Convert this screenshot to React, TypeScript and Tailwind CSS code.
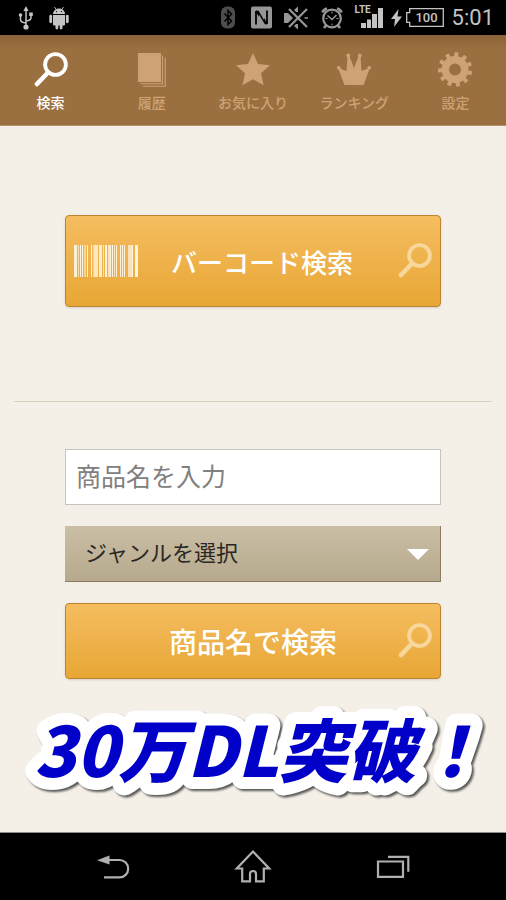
import type { ReactNode } from 'react';

const jp = "font-['Noto_Sans_CJK_JP',sans-serif]";

function SearchIcon() {
  return (
    <svg width="34" height="36" viewBox="0 0 34 36" fill="none" stroke="currentColor" aria-hidden="true">
      <circle cx="21.5" cy="12.5" r="10.4" strokeWidth="3.8" />
      <path d="M14 20.5L3 32" strokeWidth="4.6" strokeLinecap="round" />
    </svg>
  );
}

function HistoryIcon() {
  return (
    <svg width="34" height="36" viewBox="0 0 34 36" fill="none" stroke="currentColor" aria-hidden="true">
      <path d="M3 1h23v29H3z" fill="currentColor" stroke="none" />
      <path d="M27.5 3.5v28.2H5.5M30.2 5.8v28.4H8" strokeWidth="1.1" />
    </svg>
  );
}

function StarIcon() {
  return (
    <svg width="34" height="36" viewBox="0 0 34 36" fill="currentColor" aria-hidden="true">
      <path d="M17 1l5 11 12 1.3-9 8 2.6 12L17 27.2 6.4 33.3l2.6-12-9-8L12 12z" />
    </svg>
  );
}

function CrownIcon() {
  return (
    <svg width="34" height="36" viewBox="0 0 34 36" fill="currentColor" aria-hidden="true">
      <path d="M7.5 33L1.5 17l1.5-.5 6.5 2.500L10.500 4h1.800L17 16l4.700-12h1.800l1 15 6.500-2.500 1.500.5-6 16z" />
      <circle cx="1.8" cy="15.800" r="1.900" />
      <circle cx="11.200" cy="3.500" r="1.900" />
      <circle cx="22.800" cy="3.500" r="1.900" />
      <circle cx="32.200" cy="15.800" r="1.900" />
    </svg>
  );
}

function GearIcon() {
  return (
    <svg width="34" height="36" viewBox="0 0 34 36" aria-hidden="true">
      <circle cx="17" cy="17.5" r="9.7" fill="none" stroke="currentColor" strokeWidth="7.4" />
      {[5, 38, 70, 103, 136, 169, 201, 234, 267, 300, 332].map((angle) => (
        <rect key={angle} x="15" y="0.3" width="4" height="6" fill="currentColor" transform={`rotate(${angle} 17 17.5)`} />
      ))}
    </svg>
  );
}

const tabs: { label: string; icon: ReactNode }[] = [
  { label: '検索', icon: <SearchIcon /> },
  { label: '履歴', icon: <HistoryIcon /> },
  { label: 'お気に入り', icon: <StarIcon /> },
  { label: 'ランキング', icon: <CrownIcon /> },
  { label: '設定', icon: <GearIcon /> },
];

// [x, 幅, 不透明度]
const bars = [
  [0, 3, 0.9], [4, 1, 0.6], [6, 1, 0.9], [8, 1, 0.9], [10, 2, 0.5], [13, 1, 0.9],
  [17, 1, 0.9], [19, 1, 0.5], [20, 4, 0.75], [25, 3, 0.85], [29, 1, 0.7], [31, 2, 0.9],
  [34, 2, 0.7], [36, 1, 0.9], [38, 1, 0.9], [40, 1, 0.7], [42, 1, 0.9], [46, 1, 0.9],
  [48, 1, 0.9], [50, 1, 0.9], [54, 4, 0.7], [58, 1, 0.9], [61, 3, 0.95],
];

function Barcode() {
  return (
    <svg width="64" height="32" viewBox="0 0 64 32" fill="#fff8e8" aria-hidden="true">
      {bars.map(([x, width, opacity]) => (
        <rect key={x} x={x} y="0" width={width} height="32" opacity={opacity} />
      ))}
    </svg>
  );
}

function StatusBar() {
  return (
    <div className="flex h-[35px] items-center justify-between bg-black pr-3 pl-[18px] text-[#c4c4c4]">
      <div className="flex items-center gap-4">
        <svg width="15" height="24" viewBox="0 0 15 24" fill="none" stroke="currentColor" strokeWidth="1.5" aria-hidden="true">
          <path d="M8 4v16M2.5 9v4.5q0 3 5.5 3.5M13 8v3.5q0 3-5 3.5" />
          <path d="M8 0l2.6 5H5.4z" fill="currentColor" stroke="none" />
          <circle cx="2.5" cy="9" r="1.8" fill="currentColor" stroke="none" />
          <path d="M11.2 6.5h3.6v3.6h-3.6z" fill="currentColor" stroke="none" />
          <circle cx="8" cy="21" r="2.6" fill="currentColor" stroke="none" />
        </svg>
        <svg width="20" height="24" viewBox="0 0 20 24" fill="currentColor" aria-hidden="true">
          <path d="M4 8c0-3 2.500-5.500 6-5.500S16 5 16 8z" />
          <path d="M5.5 1l2 3M14.5 1l-2 3" stroke="currentColor" strokeWidth=".9" />
          <path d="M4 9h12v9.500q0 1-1 1h-1.500V22a1.400 1.400 0 0 1-2.800 0v-2.500H9.300V22a1.400 1.400 0 0 1-2.800 0v-2.500H5q-1 0-1-1z" />
          <rect x="0.3" y="8.8" width="2.8" height="8.4" rx="1.4" />
          <rect x="16.9" y="8.8" width="2.8" height="8.4" rx="1.4" />
          <circle cx="7.5" cy="5.6" r=".7" fill="#000" />
          <circle cx="12.5" cy="5.6" r=".7" fill="#000" />
        </svg>
      </div>
      <div className="flex items-center">
        <div className="mr-3 flex items-center gap-3 text-[#969696]">
          <svg className="mr-1" width="14" height="23" viewBox="0 0 14 23" aria-hidden="true">
            <rect width="14" height="22" y=".5" rx="6" fill="#4d4d4d" />
            <path d="M3.5 7.5l7 7.5L7 18.5v-14L10.5 8l-7 7.5" fill="none" stroke="#000" strokeWidth="1.5" />
          </svg>
          <svg width="21" height="23" viewBox="0 0 21 23" aria-hidden="true">
            <rect width="21" height="22" y=".5" rx="2" fill="#969696" />
            <path d="M5 18.500V5M16 18V4.500" fill="none" stroke="#000" strokeWidth="1.800" />
            <path d="M5 4.500l4 .5 7 12v1.500l-3.500-.5L5 6z" fill="#000" />
            <path d="M8 19V8.500l6 10" fill="#969696" />
            <path d="M13 4.500V14L7.500 4.500" fill="#969696" />
          </svg>
          <svg width="25" height="24" viewBox="0 0 25 24" fill="currentColor" aria-hidden="true">
            <path d="M0 7h4l5 5-5 5H0zM10 4l4-3.500v5.500h-2zM12 18h2v5.500L10 20z" />
            <path d="M5 3l18 18M23 3L5 21" stroke="currentColor" strokeWidth="2.2" />
            <path d="M20.500 12h3.500" stroke="currentColor" strokeWidth="1.5" />
          </svg>
          <svg width="22" height="24" viewBox="0 0 22 24" fill="none" stroke="currentColor" aria-hidden="true">
            <circle cx="11" cy="12.5" r="8.8" strokeWidth="2.2" />
            <path d="M6.5 9.5l4.500 4 4.500-4.500" strokeWidth="1.6" />
            <path d="M1.500 6.500Q2.500 3.500 6 2.500M20.500 6.500Q19.500 3.500 16 2.500M5 19.500L3 22M17 19.500l2 2.500" strokeWidth="2.8" />
            <path d="M11 5.500v2M11 17.500v2M4.500 12.500h2M15.500 12.500h2" strokeWidth="1" />
          </svg>
        </div>
        <div className="relative mr-2 h-6 w-7">
          <span className="absolute -top-1 left-0 font-['Roboto',sans-serif] text-[10px] leading-4 font-bold">LTE</span>
          <svg width="28" height="24" viewBox="0 0 28 24" fill="currentColor" aria-hidden="true">
            <path d="M6 17h5v5H6zM12 13.500h4V22h-4zM17 8h5v14h-5zM23 2h5v20h-5z" />
          </svg>
        </div>
        <svg className="mr-1" width="11" height="18" viewBox="0 0 11 18" fill="currentColor" aria-hidden="true">
          <path d="M7.5 0L0 10h4L3 18l8-10.500H6.500z" />
        </svg>
        <div className="relative mr-2 flex h-[19px] w-[38px] items-center justify-center pl-1 font-['Roboto',sans-serif] text-[13px] leading-4 font-medium">
          <svg className="absolute inset-0" width="38" height="19" viewBox="0 0 38 19" fill="none" stroke="currentColor" strokeWidth="1.3" aria-hidden="true">
            <path d="M3.7.7h33.6v17.6H3.7v-4H.7V4.7h3z" />
          </svg>
          100
        </div>
        <span className="font-['Roboto',sans-serif] text-[22px] leading-6">5:01</span>
      </div>
    </div>
  );
}

function AndroidNav() {
  return (
    <div className="grid h-[68px] grid-cols-3 place-items-center border-t border-[#8c8c8c] bg-black px-[43px] text-[#b0b0b0]">
      <button type="button" aria-label="戻る">
        <svg width="34" height="34" viewBox="0 0 34 34" fill="none" stroke="currentColor" strokeWidth="2.2">
          <path d="M12 10h11.500a8.700 8.700 0 0 1 0 17.400H8" />
          <path d="M1 10.3L13.5 5.500v9z" fill="currentColor" stroke="none" />
        </svg>
      </button>
      <button type="button" aria-label="ホーム">
        <svg width="38" height="36" viewBox="0 0 38 36" fill="none" stroke="currentColor" strokeWidth="2.2">
          <path d="M19 2.500L2.800 19.500H8.200V32.300H16V25a3 3 0 0 1 6 0v7.300h7.800V19.500h5.400z" />
        </svg>
      </button>
      <button type="button" aria-label="アプリ履歴">
        <svg width="34" height="34" viewBox="0 0 34 34" fill="none" stroke="currentColor" strokeWidth="2.2">
          <path d="M2 11.500h25v15.300H2zM12 6.800h20.300v15" />
        </svg>
      </button>
    </div>
  );
}

export default function App() {
  return (
    <div className={`flex min-h-screen flex-col bg-[#f5f0e7] ${jp}`}>
      <StatusBar />

      {/* タブ */}
      <nav className="grid h-[91px] grid-cols-5 border-b border-[#b39068] bg-linear-to-b from-[#8c6238] via-[#9b7040] via-15% to-[#9b7040]">
        {tabs.map((tab, index) => (
          <button
            key={tab.label}
            type="button"
            className={`flex flex-col items-center gap-1 pt-[17px] text-sm leading-5 font-medium ${
              index === 0 ? 'text-white' : 'text-[#cfa275]'
            }`}
          >
            {tab.icon}
            <span className="whitespace-nowrap">{tab.label}</span>
          </button>
        ))}
      </nav>

      <main className="flex grow flex-col">
        {/* バーコード検索 */}
        <div className="px-[65px] pt-[89px] pb-[94px]">
          <button
            type="button"
            className="grid h-[92px] w-full grid-cols-[64px_1fr_34px] items-center rounded-[4px] border border-[#bd8431] bg-linear-to-b from-[#f5bd5f] to-[#e8a734] px-2 text-[26px] font-medium text-white shadow-sm"
          >
            <Barcode />
            <span className="pr-3">バーコード検索</span>
            <span className="text-[#f9d79c]"><SearchIcon /></span>
          </button>
        </div>

        <hr className="mx-[14px] border-[#d9d0bd]" />

        {/* 商品名検索 */}
        <form className="flex flex-col px-[65px] pt-[47px]" onSubmit={(e) => e.preventDefault()}>
          <input
            type="text"
            aria-label="商品名"
            placeholder="商品名を入力"
            className="mb-[21px] h-14 w-full border border-[#c4c4c0] bg-white px-[10px] pb-1 text-[25px] text-[#333] placeholder:text-[#808080]"
          />
          <div className="relative mb-[21px]">
            <select
              aria-label="ジャンル"
              className="h-14 w-full appearance-none border-r border-b border-[#8a7a5f] bg-linear-to-b from-[#cabea5] to-[#b6a98d] px-5 pb-1 text-[22px] text-[#2b2722]"
            >
              <option>ジャンルを選択</option>
            </select>
            <svg className="pointer-events-none absolute top-[23px] right-3" width="22" height="11" viewBox="0 0 22 11" fill="#fff" aria-hidden="true">
              <path d="M0 0h22L11 11z" />
            </svg>
          </div>
          <button
            type="submit"
            className="grid h-[76px] w-full grid-cols-[34px_1fr_34px] items-center rounded-[4px] border border-[#bd8431] bg-linear-to-b from-[#f5bd5f] to-[#e8a734] px-2 text-[28px] font-medium text-white shadow-sm"
          >
            <span className="col-start-2">商品名で検索</span>
            <span className="text-[#f9d79c]"><SearchIcon /></span>
          </button>
        </form>

        {/* バナー */}
        <svg className="mt-[17px] w-full" viewBox="0 0 506 120" role="img" aria-label="30万DL突破！">
          <text
            x="34"
            y="81"
            className="font-['Noto_Sans_CJK_JP',sans-serif] text-[69px] font-black italic drop-shadow-[2px_2px_1px_#555]"
            fill="#0000c8"
            stroke="#fff"
            strokeWidth="24"
            strokeLinejoin="round"
            paintOrder="stroke"
          >
            30万DL突破！
          </text>
        </svg>
      </main>

      <AndroidNav />
    </div>
  );
}
